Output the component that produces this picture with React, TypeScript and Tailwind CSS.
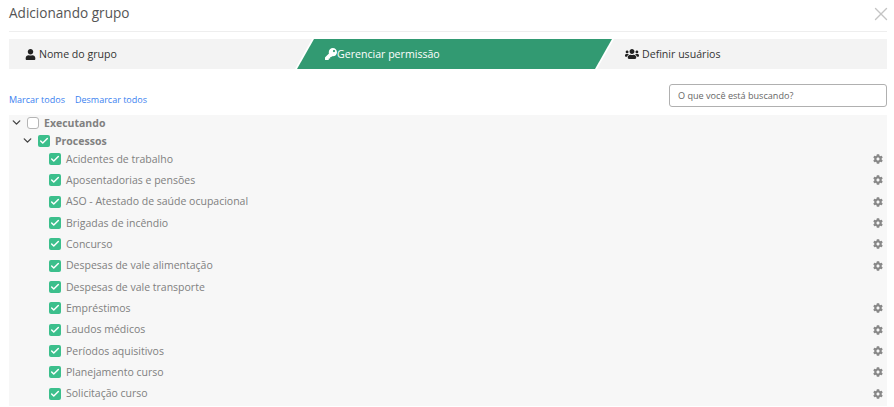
import { FaCog, FaKey, FaUser, FaUsers } from "react-icons/fa";
import { Check, ChevronDown, X } from "lucide-react";

const items: Array<[string, boolean]> = [
  ["Acidentes de trabalho", true],
  ["Aposentadorias e pensões", true],
  ["ASO - Atestado de saúde ocupacional", true],
  ["Brigadas de incêndio", true],
  ["Concurso", true],
  ["Despesas de vale alimentação", true],
  ["Despesas de vale transporte", false],
  ["Empréstimos", true],
  ["Laudos médicos", true],
  ["Períodos aquisitivos", true],
  ["Planejamento curso", true],
  ["Solicitação curso", true],
];

function Box({ checked }: { checked: boolean }) {
  return checked ? (
    <span className="flex h-[12px] w-[12px] shrink-0 items-center justify-center rounded-[2px] bg-[#3cbf8c]">
      <Check size={10} strokeWidth={3.5} className="text-white" />
    </span>
  ) : (
    <span className="h-[12px] w-[12px] shrink-0 rounded-[3px] border border-[#b5b5b5] bg-white" />
  );
}

export default function App() {
  return (
    <div className="h-[407px] w-[894px] overflow-hidden bg-white pl-[9px] pr-[7px] font-['Open_Sans',sans-serif] text-[#555]">
      <div className="flex h-[32px] items-start justify-between border-b border-[#eeeeee]">
        <h1 className="pt-[2px] text-[13.6px] leading-[22px] text-[#555]">Adicionando grupo</h1>
        <X size={22} strokeWidth={1.5} className="mt-[3px] -mr-[5px] text-[#c4c4c4]" />
      </div>

      <div className="mt-[7px] flex h-[30px] bg-[#f3f3f3] text-[10.6px] text-[#333]">
        <div className="flex w-[286px] items-center gap-[3px] pl-[16px]">
          <FaUser size={11} className="text-[#222]" />
          <span className="pt-px">Nome do grupo</span>
        </div>
        <div className="w-[319px] bg-white px-[2px] [clip-path:polygon(17px_0,100%_0,calc(100%-17px)_100%,0_100%)]">
          <div className="flex h-full items-center bg-[#329a72] pl-[28px] text-white [clip-path:polygon(17px_0,100%_0,calc(100%-17px)_100%,0_100%)]">
            <FaKey size={12} />
            <span className="pt-px">Gerenciar permissão</span>
          </div>
        </div>
        <div className="flex items-center gap-[3px] pl-[11px]">
          <FaUsers size={14} className="text-[#222]" />
          <span className="pt-px">Definir usuários</span>
        </div>
      </div>

      <div className="mt-[15px] flex h-[24px] items-start justify-between">
        <div className="flex gap-[10px] pt-[9px] text-[9px] leading-[13px] text-[#3b82f0]">
          <span>Marcar todos</span>
          <span>Desmarcar todos</span>
        </div>
        <div className="flex h-[23px] w-[218px] items-center rounded-[3px] border border-[#b0b0b0] bg-white pl-[8px] text-[9.1px] text-[#666]">
          O que você está buscando?
        </div>
      </div>

      <div className="mt-[7px] h-[291px] bg-[#f7f7f7] text-[#808080]">
        <div className="flex h-[15px] items-center pl-[1px]">
          <ChevronDown size={13} strokeWidth={2.5} className="text-[#444]" />
          <span className="ml-[4px] flex"><Box checked={false} /></span>
          <span className="ml-[5px] pt-[2px] text-[10.5px] font-bold">Executando</span>
        </div>
        <div className="mt-[3px] flex h-[15.5px] items-center pl-[12px]">
          <ChevronDown size={13} strokeWidth={2.5} className="text-[#444]" />
          <span className="ml-[4px] flex"><Box checked /></span>
          <span className="ml-[5px] pt-[2px] text-[10.5px] font-bold">Processos</span>
        </div>
        {items.map(([label, gear]) => (
          <div key={label} className="flex h-[21.33px] items-center pl-[40px] pr-[4px]">
            <Box checked />
            <span className="ml-[5px] flex-1 pt-px text-[10.5px] text-[#808080]">{label}</span>
            {gear && <FaCog size={10} className="text-[#888]" />}
          </div>
        ))}
      </div>
    </div>
  );
}
